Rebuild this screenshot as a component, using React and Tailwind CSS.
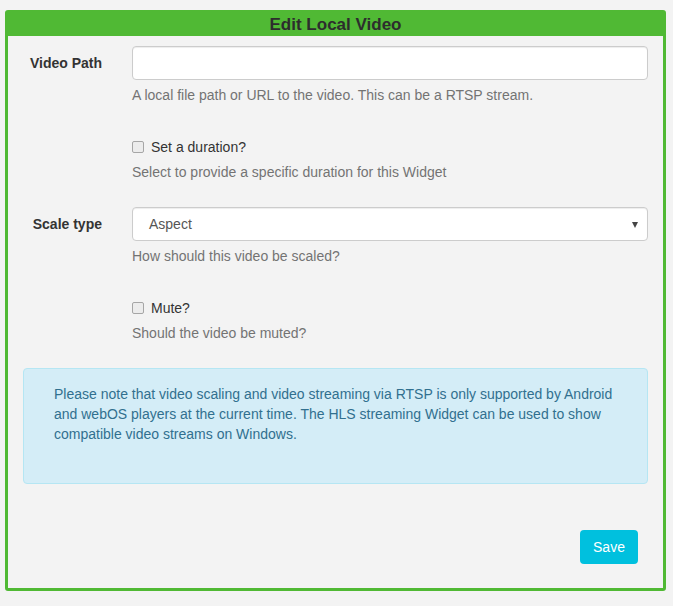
import { useState } from "react";

const font = { fontFamily: '"Liberation Sans", Arial, sans-serif' };

const Checkbox = ({ label, checked, onChange }) => (
  <label className="flex h-[20px] cursor-pointer items-center text-[14px] text-[#333]">
    <span
      onClick={onChange}
      className={`mr-[7px] box-border flex h-[12px] w-[12px] items-center justify-center rounded-[2px] border border-[#a6a6a6] ${
        checked ? "bg-[#3b99fc]" : "bg-[#ececec]"
      }`}
    />
    {label}
  </label>
);

const Help = ({ children }) => (
  <p className="mt-[5px] text-[14px] leading-[20px] text-[#737373]">{children}</p>
);

const FieldRow = ({ label, children }) => (
  <div className="mb-[15px] flex">
    <div className="w-[109px] shrink-0 pr-[15px] pt-[7px] text-right text-[14px] font-bold leading-[20px] text-[#333]">
      {label}
    </div>
    <div className="flex-1 px-[15px]">{children}</div>
  </div>
);

export default function App() {
  const [duration, setDuration] = useState(false);
  const [mute, setMute] = useState(false);

  return (
    <div className="min-h-[606px] bg-[#f3f3f3] pl-[5px] pt-[10px]" style={font}>
      <div className="box-border flex h-[581px] w-[661px] flex-col rounded-[3px] border-[3px] border-[#50b934] bg-[#f3f3f3]">
        <div className="flex h-[23px] items-center justify-center bg-[#50b934] text-[17px] font-bold text-[#2d2d2d]">
          Edit Local Video
        </div>

        <div className="pt-[10px]">
          <FieldRow label="Video Path">
            <input
              type="text"
              className="box-border h-[34px] w-full rounded-[4px] border border-[#ccc] bg-white px-[12px] text-[14px] text-[#555] shadow-[inset_0_1px_1px_rgba(0,0,0,0.075)] outline-none"
            />
            <Help>A local file path or URL to the video. This can be a RTSP stream.</Help>
          </FieldRow>

          <div className="mb-[15px] flex pt-[17px]">
            <div className="w-[109px] shrink-0" />
            <div className="flex-1 px-[15px]">
              <Checkbox
                label="Set a duration?"
                checked={duration}
                onChange={() => setDuration(!duration)}
              />
              <Help>Select to provide a specific duration for this Widget</Help>
            </div>
          </div>

          <div className="pt-[10px]">
            <FieldRow label="Scale type">
              <div className="relative box-border flex h-[34px] w-full items-center rounded-[4px] border border-[#ccc] bg-white pl-[16px] text-[14px] text-[#555] shadow-[inset_0_1px_1px_rgba(0,0,0,0.075)]">
                Aspect
                <span className="absolute right-[9px] top-[14px] h-0 w-0 border-l-[3.5px] border-r-[3.5px] border-t-[6px] border-l-transparent border-r-transparent border-t-[#444]" />
              </div>
              <Help>How should this video be scaled?</Help>
            </FieldRow>
          </div>

          <div className="mb-[15px] flex pt-[17px]">
            <div className="w-[109px] shrink-0" />
            <div className="flex-1 px-[15px]">
              <Checkbox label="Mute?" checked={mute} onChange={() => setMute(!mute)} />
              <Help>Should the video be muted?</Help>
            </div>
          </div>

          <div className="px-[15px] pt-[10px]">
            <div className="box-border h-[116px] rounded-[4px] border border-[#b5e6f3] bg-[#d4edf7] px-[30px] pt-[15px] text-[14px] leading-[20px] text-[#31708f]">
              Please note that video scaling and video streaming via RTSP is only supported by Android
              and webOS players at the current time. The HLS streaming Widget can be used to show
              compatible video streams on Windows.
            </div>
          </div>

          <div className="mt-[46px] flex justify-end pr-[25px]">
            <button className="h-[34px] w-[58px] rounded-[4px] bg-[#00c0de] text-[14px] text-white">
              Save
            </button>
          </div>
        </div>
      </div>
    </div>
  );
}
